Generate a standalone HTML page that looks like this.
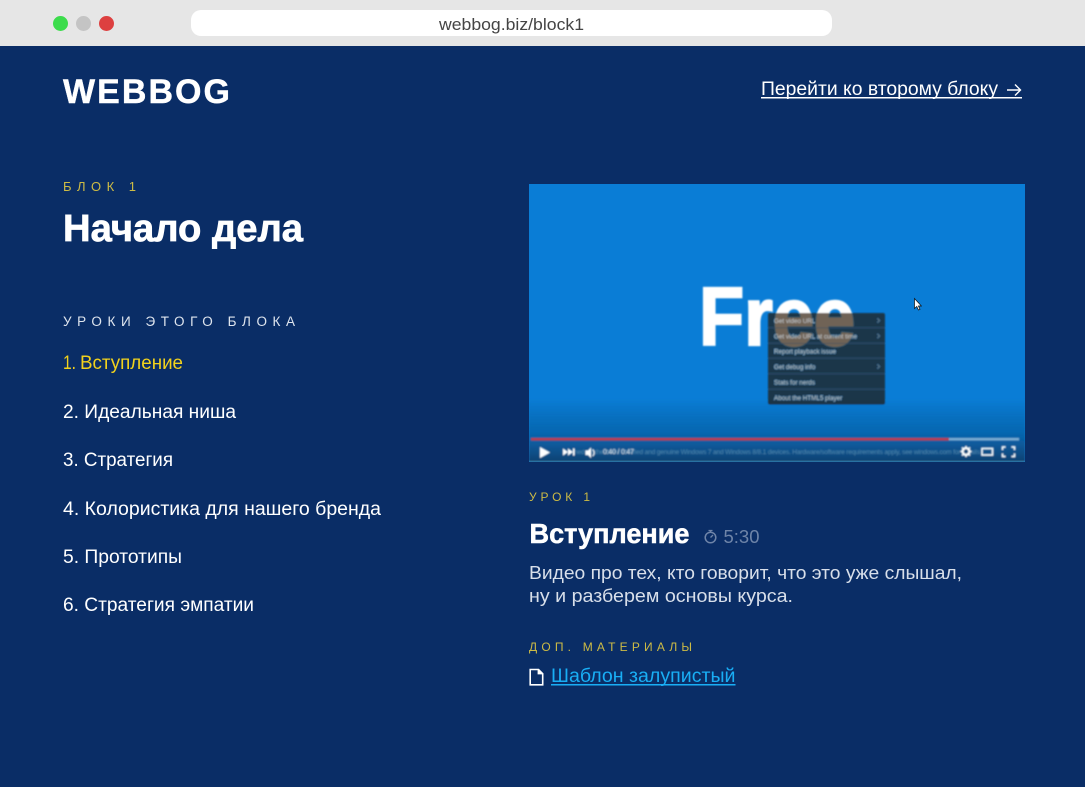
<!DOCTYPE html>
<html lang="ru">
<head>
<meta charset="utf-8">
<title>Webbog</title>
<style>
html,body{margin:0;padding:0;width:1085px;height:787px;overflow:hidden;background:#0a2d66}
svg{display:block}
text{font-family:"Liberation Sans",sans-serif}
</style>
</head>
<body>
<svg width="1085" height="787" viewBox="0 0 1085 787" xmlns="http://www.w3.org/2000/svg">
<defs>
<linearGradient id="g" x1="0" y1="0" x2="0" y2="1">
<stop offset="0" stop-color="#0a4a7c" stop-opacity="0"/>
<stop offset=".55" stop-color="#0a4f88" stop-opacity=".5"/>
<stop offset="1" stop-color="#0a4070" stop-opacity="1"/>
</linearGradient>
<filter id="b" x="-5%" y="-5%" width="110%" height="110%"><feGaussianBlur stdDeviation="0.7"/></filter>
<filter id="s" x="-5%" y="-20%" width="110%" height="140%"><feGaussianBlur stdDeviation="0.25"/></filter>
<clipPath id="vc"><rect x="529" y="184" width="496" height="278"/></clipPath>
</defs>
<rect width="1085" height="787" fill="#0a2d66"/>
<!-- browser bar -->
<rect width="1085" height="46" fill="#e6e6e6"/>
<circle cx="60.5" cy="23.5" r="7.5" fill="#3cdc4c"/>
<circle cx="83.5" cy="23.5" r="7.5" fill="#c4c4c4"/>
<circle cx="106.5" cy="23.5" r="7.5" fill="#dd4040"/>
<rect x="191" y="10" width="641" height="26" rx="10" fill="#fff"/>
<text x="439" y="30" font-size="17" fill="#444" textLength="145" lengthAdjust="spacingAndGlyphs">webbog.biz/block1</text>
<!-- header -->
<text x="63" y="103" font-size="34" font-weight="700" fill="#fff" stroke="#fff" stroke-width=".4" textLength="167" lengthAdjust="spacing">WEBBOG</text>
<text x="761" y="95" font-size="19" fill="#fff" textLength="237" lengthAdjust="spacingAndGlyphs">Перейти ко второму блоку</text>
<path d="M1007 90h13.500M1015 84.500l5.500 5.500-5.500 5.500" fill="none" stroke="#fff" stroke-width="1.400"/>
<rect x="761" y="97" width="261" height="1.500" fill="#fff"/>
<!-- left column -->
<text x="63" y="191" font-size="13" fill="#cdbb45" letter-spacing="5" textLength="78">БЛОК 1</text>
<text x="63" y="241" font-size="38" font-weight="700" fill="#fff" stroke="#fff" stroke-width=".7" textLength="240" lengthAdjust="spacingAndGlyphs">Начало дела</text>
<text x="63" y="326" font-size="13.5" fill="#dfe5ee" letter-spacing="6" textLength="238">УРОКИ ЭТОГО БЛОКА</text>
<text x="63" y="369" font-size="19" fill="#f2d21c" textLength="13" lengthAdjust="spacingAndGlyphs">1.</text>
<text x="80" y="369" font-size="19" fill="#f2d21c" textLength="103" lengthAdjust="spacingAndGlyphs">Вступление</text>
<text x="63" y="418" font-size="19" fill="#fff" textLength="173" lengthAdjust="spacingAndGlyphs">2. Идеальная ниша</text>
<text x="63" y="466" font-size="19" fill="#fff" textLength="110" lengthAdjust="spacingAndGlyphs">3. Стратегия</text>
<text x="63" y="515" font-size="19" fill="#fff" textLength="318" lengthAdjust="spacingAndGlyphs">4. Колористика для нашего бренда</text>
<text x="63" y="563" font-size="19" fill="#fff" textLength="119" lengthAdjust="spacingAndGlyphs">5. Прототипы</text>
<text x="63" y="611" font-size="19" fill="#fff" textLength="191" lengthAdjust="spacingAndGlyphs">6. Стратегия эмпатии</text>
<!-- video -->
<g clip-path="url(#vc)">
<rect x="529" y="184" width="496" height="278" fill="#0a7dd6"/>
<g filter="url(#b)">
<text x="699" y="345" font-size="83" font-weight="700" fill="#fff" stroke="#fff" stroke-width="2.200" textLength="156" lengthAdjust="spacingAndGlyphs">Free</text>
<rect x="529" y="398" width="496" height="64" fill="url(#g)"/>
<rect x="768" y="313" width="117" height="91.500" rx="2" fill="#261400" fill-opacity=".66"/>
<g fill="#3a4d60" fill-opacity=".8">
<rect x="768" y="327.500" width="117" height=".7"/>
<rect x="768" y="343" width="117" height=".7"/>
<rect x="768" y="358" width="117" height=".7"/>
<rect x="768" y="373.500" width="117" height=".7"/>
<rect x="768" y="389" width="117" height=".7"/>
</g>
<g font-size="6.300" fill="#c5c9cd">
<text x="774" y="323">Get video URL</text>
<text x="774" y="338.500">Get video URL at current time</text>
<text x="774" y="353.500">Report playback issue</text>
<text x="774" y="369">Get debug info</text>
<text x="774" y="384.500">Stats for nerds</text>
<text x="774" y="399.800">About the HTML5 player</text>
</g>
<g fill="none" stroke="#77858f" stroke-width=".7">
<path d="M877.500 318.500l2 2-2 2"/>
<path d="M877.500 334l2 2-2 2"/>
<path d="M877.500 364.500l2 2-2 2"/>
</g>
<text x="574" y="454" font-size="6.600" fill="#4f86ac" textLength="406" lengthAdjust="spacing">hed on the latest certified and genuine Windows 7 and Windows 8/8.1 devices. Hardware/software requirements apply, see windows.com for details</text>
<rect x="531" y="438" width="418" height="2.400" fill="#c43a48"/>
<rect x="949" y="438" width="70" height="2.400" fill="#7fadd2"/>
<path d="M540 447v11l10-5.500z" fill="#fff"/>
<path d="M563 448.500l5 3.500-5 3.500zM568 448.500l5 3.500-5 3.500zM573 448.500h1.500v7H573z" fill="#fff"/>
<path d="M585.500 450.500h2.500l3-3v10.500l-3-3h-2.500z" fill="#fff"/>
<path d="M592.500 449.500a4 4 0 0 1 0 6.500" fill="none" stroke="#fff" stroke-width="1"/>
<text x="603" y="454" font-size="7" fill="#dde5ec" textLength="31">0:40 / 0:47</text>
<circle cx="966" cy="451.500" r="3.500" fill="none" stroke="#fff" stroke-width="2"/>
<path d="M966 446v11M960.500 451.500h11M962 447.500l8 8M970 447.500l-8 8" stroke="#fff" stroke-width="1.300"/>
<circle cx="966" cy="451.500" r="2.200" fill="#0a4a7a"/>
<rect x="982" y="448.500" width="10.500" height="6.500" fill="none" stroke="#fff" stroke-width="1.500"/>
<path d="M1002.500 450v-3h3M1011.500 447h3v3M1014.500 453.500v3h-3M1005.500 456.500h-3v-3" fill="none" stroke="#fff" stroke-width="1.500"/>
<rect x="529" y="461" width="496" height="1" fill="#3c7d9c"/>
</g>
<path d="M914.500 298.500v10l2.300-2 1.600 3.500 1.600-.7-1.600-3.300h3z" fill="#fff" stroke="#111" stroke-width=".7" filter="url(#s)"/>
</g>
<!-- lesson info -->
<text x="529" y="501" font-size="12" fill="#cdbb45" letter-spacing="5" textLength="66">УРОК 1</text>
<text x="529.500" y="543" font-size="28" font-weight="700" fill="#fff" stroke="#fff" stroke-width=".5" textLength="160" lengthAdjust="spacingAndGlyphs">Вступление</text>
<circle cx="710.500" cy="537.500" r="5.300" fill="none" stroke="#6e84a8" stroke-width="1.500"/>
<path d="M708.500 530.500h4M710.500 530.500v1.500M710.500 537.500l2.500-2.500" fill="none" stroke="#6e84a8" stroke-width="1.300"/>
<text x="723.500" y="543" font-size="18.500" fill="#6e84a8" textLength="36" lengthAdjust="spacingAndGlyphs">5:30</text>
<text x="529" y="579" font-size="18.500" fill="#d8dfea" textLength="433" lengthAdjust="spacingAndGlyphs">Видео про тех, кто говорит, что это уже слышал,</text>
<text x="529" y="602" font-size="18.500" fill="#d8dfea" textLength="264" lengthAdjust="spacingAndGlyphs">ну и разберем основы курса.</text>
<text x="529" y="651" font-size="12" fill="#cdbb45" letter-spacing="4" textLength="167">ДОП. МАТЕРИАЛЫ</text>
<path d="M530.200 669.500h8.300l4.200 4.200v11.100h-12.500z" fill="none" stroke="#fff" stroke-width="1.600"/>
<path d="M538 669.500v4.500h4.500" fill="#fff" stroke="#fff" stroke-width=".8"/>
<text x="551" y="682" font-size="19" fill="#19aef5" textLength="184.500" lengthAdjust="spacingAndGlyphs">Шаблон залупистый</text>
<rect x="551" y="684" width="184.500" height="1.500" fill="#19aef5"/>
</svg>
</body>
</html>
